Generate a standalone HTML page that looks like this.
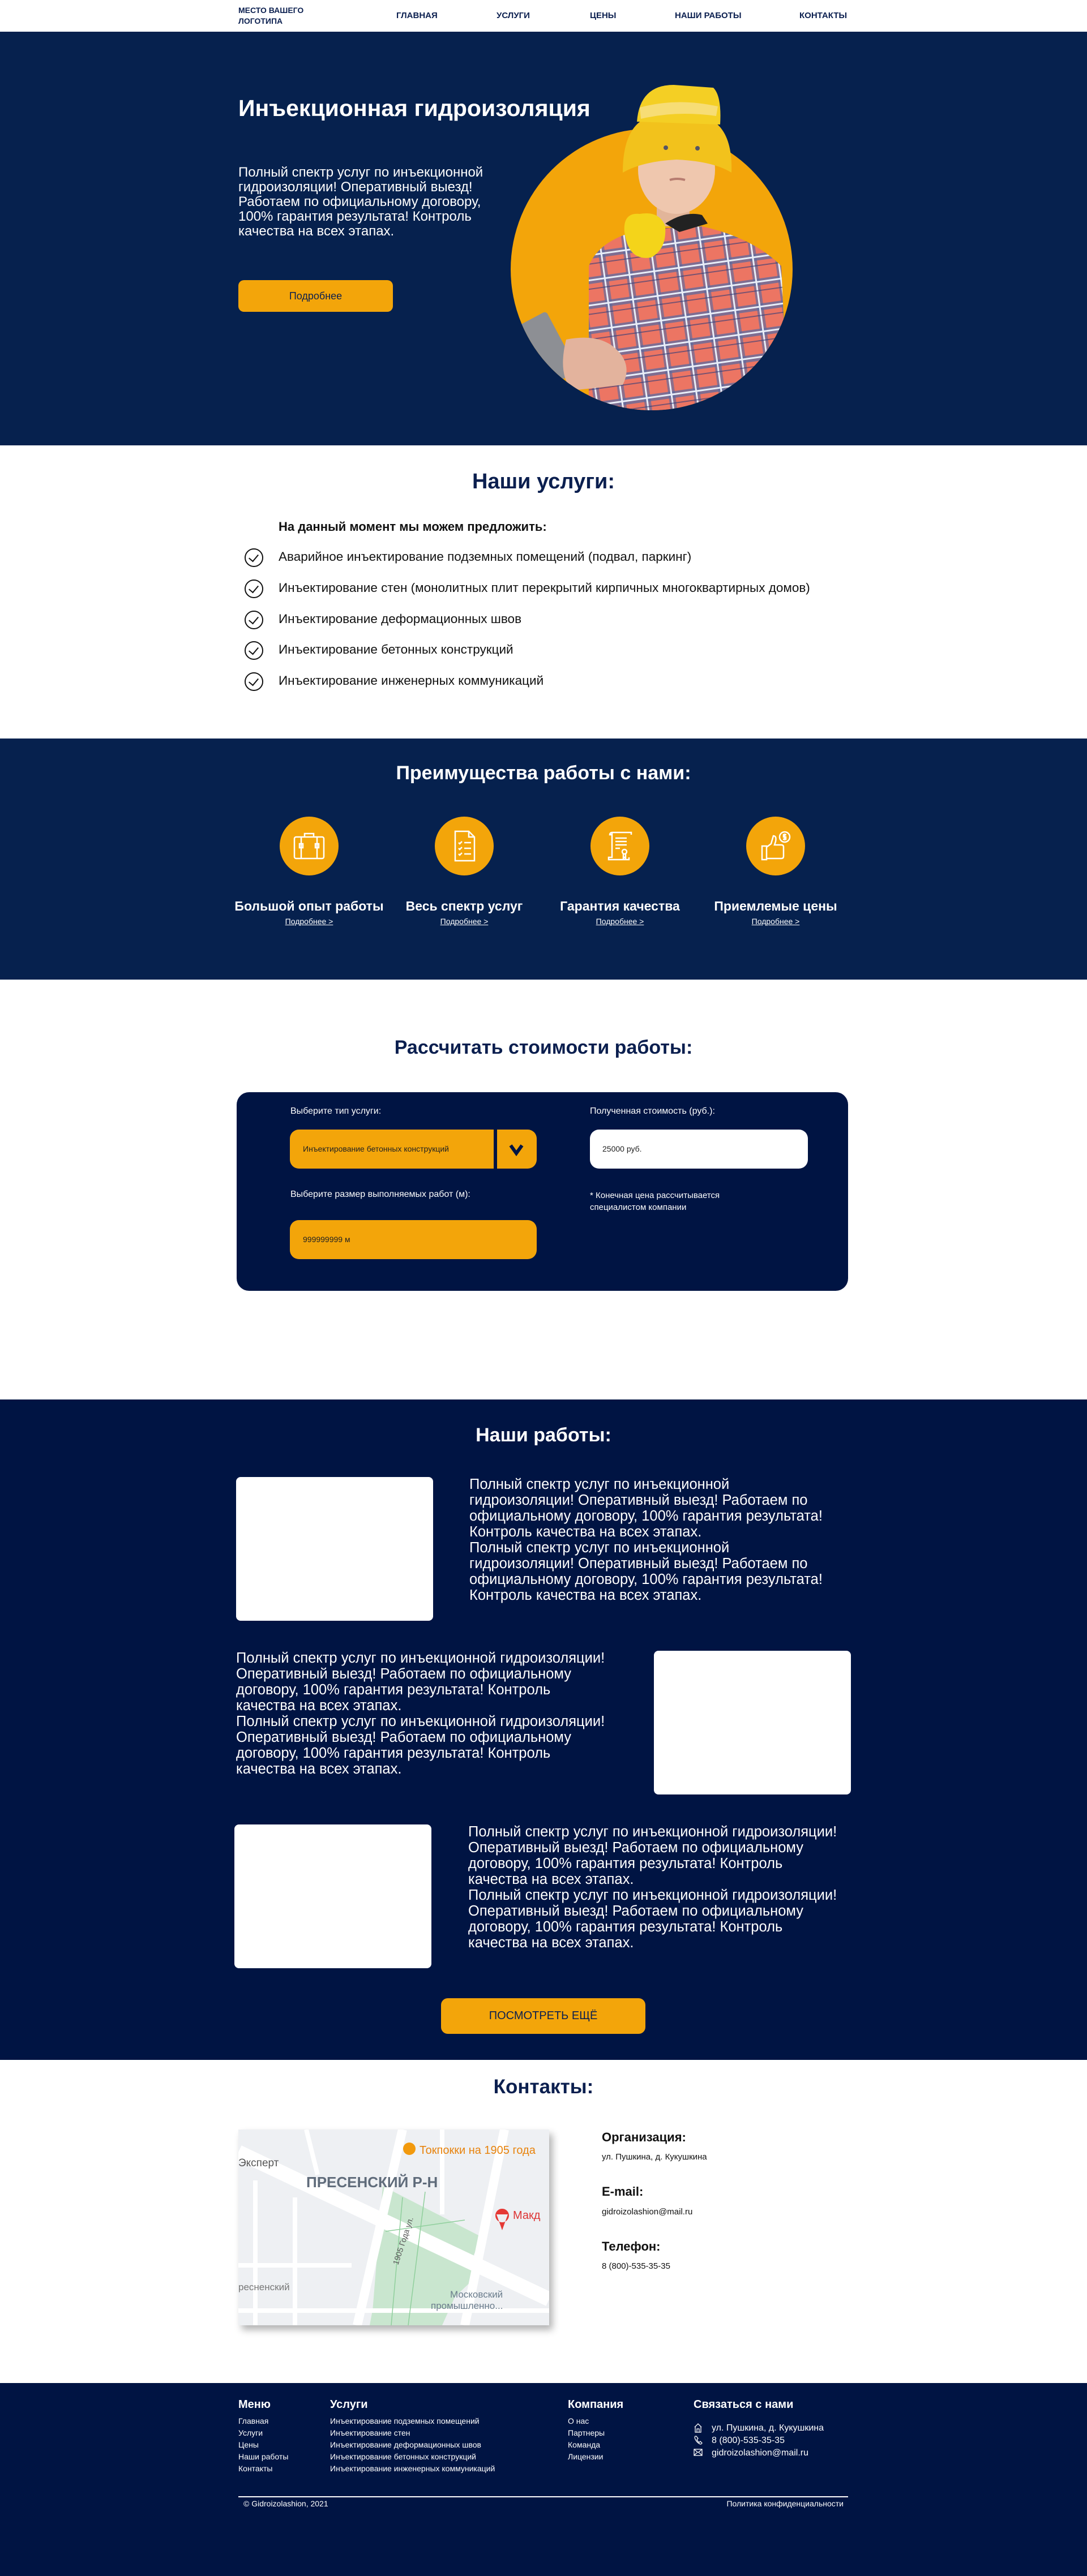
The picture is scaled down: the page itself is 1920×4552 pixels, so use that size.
<!DOCTYPE html>
<html><head><meta charset="utf-8">
<style>
*{margin:0;padding:0;box-sizing:border-box}
body{width:1920px;height:4552px;position:relative;background:#fff;font-family:"Liberation Sans","Noto Sans CJK SC",sans-serif;overflow:hidden}
.a{position:absolute;white-space:nowrap}
.navy{background:#06214e}
.dk{background:#001443}
.h2{font-weight:bold;font-size:34px;left:0;width:1920px;text-align:center}
.nav{font-size:15px;font-weight:bold;color:#0b1f4f;top:19px}
.li{font-size:22.5px;color:#111;left:492px}
.chk{position:absolute;left:432px;width:33px;height:33px;border:2.5px solid #111;border-radius:50%}
.chk:after{content:"";position:absolute;left:9px;top:5px;width:8px;height:14px;border:solid #111;border-width:0 2.5px 2.5px 0;transform:rotate(40deg)}
.ic{position:absolute;width:104px;height:104px;border-radius:50%;background:#f3a50a;top:1443px}
.ic svg{position:absolute;left:22px;top:22px}
.lab{font-size:23px;font-weight:bold;color:#fff;text-align:center;width:300px;top:1588px}
.lnk{font-size:14px;color:#fff;text-decoration:underline;text-align:center;width:300px;top:1620px}
.wt{font-size:25.5px;color:#fff;line-height:28px}
.wi{position:absolute;background:#fff;border-radius:8px;width:348px;height:254px}
.fh{font-size:20px;font-weight:bold;color:#fff;top:4238px}
.fl{font-size:14px;color:#fff;line-height:21px}
</style></head><body>
<div class="a" style="left:421px;top:9px;font-size:14px;font-weight:bold;color:#0b1f4f;line-height:19px">МЕСТО ВАШЕГО<br>ЛОГОТИПА</div>
<div class="a nav" style="left:700px">ГЛАВНАЯ</div>
<div class="a nav" style="left:877px">УСЛУГИ</div>
<div class="a nav" style="left:1042px">ЦЕНЫ</div>
<div class="a nav" style="left:1192px">НАШИ РАБОТЫ</div>
<div class="a nav" style="left:1412px">КОНТАКТЫ</div>
<div class="a navy" style="left:0;top:56px;width:1920px;height:731px"></div>
<svg class="a" style="left:0;top:0" width="1920" height="790" viewBox="0 0 1920 790">
<defs>
<pattern id="pl" width="44" height="44" patternUnits="userSpaceOnUse" patternTransform="rotate(-8)">
<rect width="44" height="44" fill="#ec7563"/>
<rect x="0" y="14" width="44" height="12" fill="#5b6aa0" opacity=".75"/>
<rect x="16" y="0" width="12" height="44" fill="#5b6aa0" opacity=".65"/>
<rect x="0" y="18" width="44" height="3" fill="#e9eef8"/>
<rect x="20" y="0" width="3" height="44" fill="#e9eef8"/>
<rect x="0" y="34" width="44" height="2" fill="#2b3a78" opacity=".6"/>
</pattern>
<clipPath id="cc"><rect x="880" y="100" width="540" height="380"/><circle cx="1151" cy="476" r="249"/></clipPath>
</defs>
<circle cx="1151" cy="476" r="249" fill="#f3a50a"/>
<g clip-path="url(#cc)">
<path d="M1040 470 Q1060 420 1140 405 L1240 400 Q1330 420 1380 470 L1395 800 L1040 800 Z" fill="url(#pl)"/>
<rect x="1160" y="340" width="58" height="60" fill="#e2b59a"/>
<ellipse cx="1195" cy="300" rx="68" ry="78" fill="#efc7ae"/>
<path d="M1103 410 Q1100 375 1130 378 Q1165 372 1175 400 Q1178 440 1150 455 Q1110 462 1103 410 Z" fill="#f4d41a"/>
<path d="M1175 395 Q1210 372 1240 380 L1250 395 L1200 410 Z" fill="#222"/>
<rect x="927" y="560" width="70" height="120" rx="6" fill="#8d8f94" transform="rotate(-28 960 620)"/>
<path d="M1000 600 Q1050 590 1080 610 Q1120 640 1100 680 L1010 690 Q985 660 1000 600 Z" fill="#e3b39d"/>
</g>
<path d="M1100 305 Q1100 220 1150 205 L1240 205 Q1295 220 1292 305 Q1260 285 1195 282 Q1135 285 1100 305 Z" fill="#f2c21c"/>
<path d="M1125 215 Q1130 150 1190 150 L1260 155 Q1275 170 1272 220 Z" fill="#f4cf24"/>
<path d="M1130 190 Q1195 172 1268 188 L1265 205 Q1195 195 1132 210 Z" fill="#f7e08a" opacity=".8"/>
<circle cx="1176" cy="261" r="4" fill="#556"/><circle cx="1232" cy="262" r="4" fill="#556"/>
<path d="M1183 318 Q1196 314 1210 318" stroke="#b77c70" stroke-width="4" fill="none"/>
</svg>
<div class="a" style="left:421px;top:168px;font-size:41px;font-weight:bold;color:#fff">Инъекционная гидроизоляция</div>
<div class="a" style="left:421px;top:292px;font-size:24px;color:#fff;line-height:26px">Полный спектр услуг по инъекционной<br>гидроизоляции! Оперативный выезд!<br>Работаем по официальному договору,<br>100% гарантия результата! Контроль<br>качества на всех этапах.</div>
<div class="a" style="left:421px;top:495px;width:273px;height:56px;background:#f3a50a;border-radius:10px;text-align:center;line-height:56px;font-size:18px;color:#0b1f4f">Подробнее</div>
<div class="a h2" style="top:830px;color:#0b1f4f;font-size:38px">Наши услуги:</div>
<div class="a" style="left:492px;top:918px;font-size:22px;font-weight:bold;color:#111">На данный момент мы можем предложить:</div>
<div class="chk" style="top:969px"></div><div class="a li" style="top:971px">Аварийное инъектирование подземных помещений (подвал, паркинг)</div>
<div class="chk" style="top:1024px"></div><div class="a li" style="top:1026px">Инъектирование стен (монолитных плит перекрытий кирпичных многоквартирных домов)</div>
<div class="chk" style="top:1079px"></div><div class="a li" style="top:1081px">Инъектирование деформационных швов</div>
<div class="chk" style="top:1133px"></div><div class="a li" style="top:1135px">Инъектирование бетонных конструкций</div>
<div class="chk" style="top:1188px"></div><div class="a li" style="top:1190px">Инъектирование инженерных коммуникаций</div>
<div class="a navy" style="left:0;top:1305px;width:1920px;height:426px"></div>
<div class="a h2" style="top:1347px;color:#fff">Преимущества работы с нами:</div>
<div class="ic" style="left:494px"><svg width="60" height="60" viewBox="0 0 60 60" fill="none" stroke="#fff" stroke-width="2.5"><rect x="4" y="14" width="52" height="38" rx="3"/><path d="M22 14V8h16v6M16 14v38M44 14v38"/><rect x="13" y="26" width="6" height="7"/><rect x="41" y="26" width="6" height="7"/></svg></div>
<div class="ic" style="left:768px"><svg width="60" height="60" viewBox="0 0 60 60" fill="none" stroke="#fff" stroke-width="2.5"><path d="M14 4h24l10 10v42H14z M38 4v10h10"/><path d="M20 24l2 2 4-4M20 34l2 2 4-4M20 44l2 2 4-4M30 24h12M30 34h12M30 44h12"/></svg></div>
<div class="ic" style="left:1043px"><svg width="60" height="60" viewBox="0 0 60 60" fill="none" stroke="#fff" stroke-width="2.5"><path d="M16 6h34v4M16 6v44h-6v4h36v-4M16 6a4 4 0 0 0-4 4h4"/><path d="M22 16h20M22 22h20M22 28h20M22 34h8"/><circle cx="38" cy="40" r="4"/><path d="M36 44v8l2-2 2 2v-8"/></svg></div>
<div class="ic" style="left:1318px"><svg width="60" height="60" viewBox="0 0 60 60" fill="none" stroke="#fff" stroke-width="2.5"><path d="M6 30h8v24H6zM14 32l8-6 4-14q6 0 4 10l-2 6h12q4 0 4 4v16q0 4-4 4H14"/><circle cx="46" cy="14" r="9"/><path d="M49 10h-5v4h4v4h-5M46 8v12"/></svg></div>
<div class="a lab" style="left:396px">Большой опыт работы</div>
<div class="a lab" style="left:670px">Весь спектр услуг</div>
<div class="a lab" style="left:945px">Гарантия качества</div>
<div class="a lab" style="left:1220px">Приемлемые цены</div>
<div class="a lnk" style="left:396px">Подробнее &gt;</div>
<div class="a lnk" style="left:670px">Подробнее &gt;</div>
<div class="a lnk" style="left:945px">Подробнее &gt;</div>
<div class="a lnk" style="left:1220px">Подробнее &gt;</div>
<div class="a h2" style="top:1832px;color:#0b1f4f">Рассчитать стоимости работы:</div>
<div class="a dk" style="left:418px;top:1930px;width:1080px;height:351px;border-radius:22px"></div>
<div class="a" style="left:513px;top:1955px;font-size:16px;color:#fff">Выберите тип услуги:</div>
<div class="a" style="left:1042px;top:1955px;font-size:16px;color:#fff">Полученная стоимость (руб.):</div>
<div class="a" style="left:512px;top:1996px;width:436px;height:69px;background:#f3a50a;border-radius:16px"></div>
<div class="a" style="left:872px;top:1996px;width:6px;height:69px;background:#001443"></div>
<div class="a" style="left:535px;top:2022px;font-size:14px;color:#222">Инъектирование бетонных конструкций</div>
<svg class="a" style="left:899px;top:2018px" width="26" height="26" viewBox="0 0 26 26"><path d="M3 6l10 14 10-14" fill="none" stroke="#001443" stroke-width="6"/></svg>
<div class="a" style="left:1042px;top:1996px;width:385px;height:69px;background:#fff;border-radius:16px"></div>
<div class="a" style="left:1064px;top:2022px;font-size:14px;color:#222">25000 руб.</div>
<div class="a" style="left:513px;top:2102px;font-size:16px;color:#fff">Выберите размер выполняемых работ (м):</div>
<div class="a" style="left:1042px;top:2102px;font-size:15px;color:#fff;line-height:21px">* Конечная цена рассчитывается<br>специалистом компании</div>
<div class="a" style="left:512px;top:2156px;width:436px;height:69px;background:#f3a50a;border-radius:16px"></div>
<div class="a" style="left:535px;top:2182px;font-size:14px;color:#222">999999999 м</div>
<div class="a dk" style="left:0;top:2473px;width:1920px;height:1167px"></div>
<div class="a h2" style="top:2517px;color:#fff">Наши работы:</div>
<div class="wi" style="left:417px;top:2610px"></div>
<div class="a wt" style="left:829px;top:2609px">Полный спектр услуг по инъекционной<br>гидроизоляции! Оперативный выезд! Работаем по<br>официальному договору, 100% гарантия результата!<br>Контроль качества на всех этапах.<br>Полный спектр услуг по инъекционной<br>гидроизоляции! Оперативный выезд! Работаем по<br>официальному договору, 100% гарантия результата!<br>Контроль качества на всех этапах.</div>
<div class="a wt" style="left:417px;top:2916px">Полный спектр услуг по инъекционной гидроизоляции!<br>Оперативный выезд! Работаем по официальному<br>договору, 100% гарантия результата! Контроль<br>качества на всех этапах.<br>Полный спектр услуг по инъекционной гидроизоляции!<br>Оперативный выезд! Работаем по официальному<br>договору, 100% гарантия результата! Контроль<br>качества на всех этапах.</div>
<div class="wi" style="left:1155px;top:2917px"></div>
<div class="wi" style="left:414px;top:3224px"></div>
<div class="a wt" style="left:827px;top:3223px">Полный спектр услуг по инъекционной гидроизоляции!<br>Оперативный выезд! Работаем по официальному<br>договору, 100% гарантия результата! Контроль<br>качества на всех этапах.<br>Полный спектр услуг по инъекционной гидроизоляции!<br>Оперативный выезд! Работаем по официальному<br>договору, 100% гарантия результата! Контроль<br>качества на всех этапах.</div>
<div class="a" style="left:779px;top:3531px;width:361px;height:63px;background:#f3a50a;border-radius:12px;text-align:center;line-height:63px;font-size:20px;color:#0b1f4f">ПОСМОТРЕТЬ ЕЩЁ</div>
<div class="a h2" style="top:3668px;color:#0b1f4f;font-size:35px">Контакты:</div>
<div class="a" style="left:421px;top:3763px;width:549px;height:346px;background:#eef0f3;box-shadow:6px 8px 12px rgba(0,0,0,.3);overflow:hidden">
<svg width="549" height="346" viewBox="0 0 549 346">
<polygon points="250,250 400,210 420,260 330,346 232,346" fill="#c9e6cf"/>
<polygon points="255,100 430,190 360,346 235,346" fill="#c9e6cf"/>
<path d="M0 40 L549 300" stroke="#fff" stroke-width="26"/>
<path d="M290 0 L210 346" stroke="#fff" stroke-width="16"/>
<path d="M470 0 L400 346" stroke="#fff" stroke-width="16"/>
<path d="M30 90 L30 346 M100 120 L100 346 M0 240 L200 240 M0 320 L549 320 M120 0 L140 80 M360 0 L360 150" stroke="#fff" stroke-width="8" fill="none"/>
<path d="M290 120 L270 346 M330 110 L300 346 M260 180 L400 160" stroke="#8fcf9c" stroke-width="1.5"/>
<text x="120" y="102" font-family="Liberation Sans,sans-serif" font-weight="bold" font-size="26" fill="#5f6b7a">ПРЕСЕНСКИЙ Р-Н</text>
<text x="320" y="43" font-family="Liberation Sans,sans-serif" font-size="20" fill="#e8830c">Токпокки на 1905 года</text>
<circle cx="302" cy="34" r="11" fill="#f29a0e"/>
<path d="M466 140 a12 12 0 1 1 -0.1 0 Z M456 150 L466 178 L476 150" fill="#e53935"/>
<text x="485" y="158" font-family="Liberation Sans,sans-serif" font-size="20" fill="#d33">Макд</text>
<text x="0" y="65" font-family="Liberation Sans,sans-serif" font-size="19" fill="#555">Эксперт</text>
<text x="0" y="284" font-family="Liberation Sans,sans-serif" font-size="17" fill="#777">ресненский</text>
<text x="374" y="297" font-family="Liberation Sans,sans-serif" font-size="17" fill="#6a7c8c">Московский</text>
<text x="340" y="317" font-family="Liberation Sans,sans-serif" font-size="17" fill="#6a7c8c">промышленно...</text>
<text transform="translate(282 240) rotate(-72)" font-family="Liberation Sans,sans-serif" font-size="14" fill="#555">1905 Года ул.</text>
</svg></div>
<div class="a" style="left:1063px;top:3764px;font-size:22px;font-weight:bold;color:#111">Организация:</div>
<div class="a" style="left:1063px;top:3803px;font-size:15px;color:#111">ул. Пушкина, д. Кукушкина</div>
<div class="a" style="left:1063px;top:3860px;font-size:22px;font-weight:bold;color:#111">E-mail:</div>
<div class="a" style="left:1063px;top:3900px;font-size:15px;color:#111">gidroizolashion@mail.ru</div>
<div class="a" style="left:1063px;top:3957px;font-size:22px;font-weight:bold;color:#111">Телефон:</div>
<div class="a" style="left:1063px;top:3996px;font-size:15px;color:#111">8 (800)-535-35-35</div>
<div class="a dk" style="left:0;top:4211px;width:1920px;height:341px"></div>
<div class="a fh" style="left:421px">Меню</div>
<div class="a fh" style="left:583px">Услуги</div>
<div class="a fh" style="left:1003px">Компания</div>
<div class="a fh" style="left:1225px">Связаться с нами</div>
<div class="a fl" style="left:421px;top:4268px">Главная<br>Услуги<br>Цены<br>Наши работы<br>Контакты</div>
<div class="a fl" style="left:583px;top:4268px">Инъектирование подземных помещений<br>Инъектирование стен<br>Инъектирование деформационных швов<br>Инъектирование бетонных конструкций<br>Инъектирование инженерных коммуникаций</div>
<div class="a fl" style="left:1003px;top:4268px">О нас<br>Партнеры<br>Команда<br>Лицензии</div>
<svg class="a" style="left:1225px;top:4281px" width="16" height="68" viewBox="0 0 16 68" fill="none" stroke="#fff" stroke-width="1.3"><path d="M2 8l6-6 6 6M3 7v10h10V7M6 17v-6h4v6"/><path d="M3 24q-2 2 1 7t8 7q2 0 3-2l-3-3-2 2q-3-2-4-5l2-2-3-4z"/><rect x="1" y="47" width="14" height="11"/><path d="M1 47l7 6 7-6M1 58l5-5M15 58l-5-5"/></svg>
<div class="a" style="left:1257px;top:4280px;font-size:16px;color:#fff;line-height:22px">ул. Пушкина, д. Кукушкина<br>8 (800)-535-35-35<br>gidroizolashion@mail.ru</div>
<div class="a" style="left:421px;top:4411px;width:1077px;height:2px;background:#fff"></div>
<div class="a" style="left:430px;top:4416px;font-size:14px;color:#fff">© Gidroizolashion, 2021</div>
<div class="a" style="left:1250px;top:4416px;width:240px;text-align:right;font-size:14px;color:#fff">Политика конфиденциальности</div>
</body></html>
